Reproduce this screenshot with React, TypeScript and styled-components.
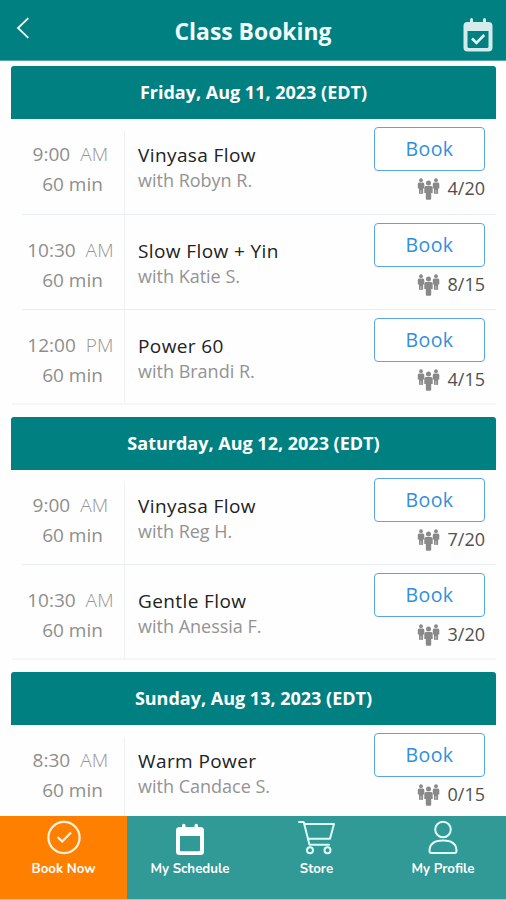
import React from "react";
import styled, { createGlobalStyle } from "styled-components";

const GlobalStyle = createGlobalStyle`
  * { box-sizing: border-box; }
  body { margin: 0; background: #fff; font-family: "Open Sans", "Noto Sans", sans-serif; }
`;

const Screen = styled.div`
  width: 506px;
  height: 900px;
  display: flex;
  flex-direction: column;
  overflow: hidden;
  background: #fefefe;
`;

const TopBar = styled.header`
  flex: 0 0 61px;
  display: grid;
  grid-template-columns: 48px 1fr 48px;
  align-items: start;
  background: #008080;
  border-bottom: 1px solid #5aa9a9;
`;

const IconButton = styled.button<{ $top: number; $left: number }>`
  display: block;
  border: 0;
  background: none;
  padding: ${(p) => p.$top}px 0 0 ${(p) => p.$left}px;
  text-align: left;
  line-height: 0;
`;

const Title = styled.h1`
  margin: 0;
  padding-top: 16px;
  text-align: center;
  font-size: 22.9px;
  line-height: 32px;
  font-weight: 700;
  color: #f4fbfb;
`;

const Schedule = styled.main`
  flex: 1;
  min-height: 0;
  overflow: hidden;
  padding: 5px 10px 0 11px;
`;

const Day = styled.section`
  height: 351px;
  &:nth-child(2) { height: 255px; }
`;

const DayTitle = styled.h2`
  margin: 0;
  height: 53px;
  border-radius: 3px 3px 0 0;
  background: #008080;
  color: #fff;
  text-align: center;
  font-size: 18px;
  line-height: 53px;
  font-weight: 700;
`;

const Row = styled.div<{ $last: boolean }>`
  height: 95px;
  margin-left: ${(p) => (p.$last ? 1 : 11)}px;
  padding-left: ${(p) => (p.$last ? 10 : 0)}px;
  display: grid;
  grid-template-columns: 103px 1fr 122px;
  border-bottom: ${(p) => (p.$last ? "2px solid #f5f6f6" : "1px solid #e6eeef")};

  ${Day}:first-child > ${DayTitle} + & { height: 96px; }
`;

const TimeCell = styled.div<{ $first: boolean }>`
  margin-top: ${(p) => (p.$first ? 12 : 0)}px;
  padding-top: ${(p) => (p.$first ? 8 : 20)}px;
  padding-right: 5px;
  border-right: 1px solid #f0f2f2;
  text-align: center;
  color: #8e8e8e;
  font-size: 19px;
  line-height: 30px;
`;

const Clock = styled.div`
  white-space: nowrap;
`;

const Meridiem = styled.span`
  margin-left: 10px;
  color: #969696;
  font-weight: 300;
  letter-spacing: 0.2px;
`;

const Duration = styled.div`
  padding-left: 4px;
`;

const ClassCell = styled.div`
  padding: 23px 0 0 13px;
  white-space: nowrap;
`;

const ClassName = styled.div`
  color: #222;
  font-size: 19px;
  line-height: 26px;
  letter-spacing: 0.4px;
`;

const Teacher = styled.div`
  color: #939393;
  font-size: 18px;
  line-height: 24px;
`;

const ActionCell = styled.div`
  padding: 8px 11px 0 0;
`;

const BookButton = styled.button`
  display: block;
  width: 111px;
  height: 44px;
  padding: 0;
  border: 1.5px solid #5aa5e6;
  border-radius: 4px;
  background: #fff;
  color: #2f8fdf;
  font: 400 19.5px/42px "Open Sans", "Noto Sans", sans-serif;
  letter-spacing: 0.4px;
`;

const Capacity = styled.div`
  display: flex;
  justify-content: flex-end;
  gap: 8px;
  height: 34px;
  color: #505050;
  font-size: 18px;
  line-height: 34px;
  svg { margin-top: 6px; }
`;

const TabBar = styled.nav`
  flex: 0 0 84px;
  display: grid;
  grid-template-columns: 127px 126px 127px 126px;
  border-bottom: 1px solid #9ccbc9;
  background: #319996;
`;

const Tab = styled.a<{ $active?: boolean }>`
  display: flex;
  flex-direction: column;
  align-items: center;
  padding-top: 2px;
  background: ${(p) => (p.$active ? "#ff8000" : "#319996")};
  color: #fff;
  font: 700 13.3px/18px "Nunito", "Open Sans", sans-serif;
  white-space: nowrap;
  svg { margin-bottom: 5px; }
`;

const BackIcon = () => (
  <svg width="14" height="22" viewBox="0 0 14 22" fill="none" stroke="#f0f8f8" strokeWidth="1.8">
    <path d="M12.3 1.2 2 11l10.3 9.8" />
  </svg>
);

const CalendarCheckIcon = () => (
  <svg width="30" height="34" viewBox="0 0 30 34">
    <path fill="#d3ebeb" fillRule="evenodd" d="M7 4V1.5a1.5 1.5 0 0 1 3 0V4h10V1.5a1.5 1.5 0 0 1 3 0V4h2.5a4 4 0 0 1 4 4v21.500a4 4 0 0 1-4 4h-21a4 4 0 0 1-4-4V8a4 4 0 0 1 4-4zM4.500 13v15.500a1.500 1.500 0 0 0 1.500 1.500h18a1.500 1.500 0 0 0 1.500-1.500V13z" />
    <path d="m9 20.5 4.500 4.500 7.700-8" fill="none" stroke="#e4f3f3" strokeWidth="2.600" />
  </svg>
);

const CalendarIcon = () => (
  <svg width="30" height="37" viewBox="0 0 30 37">
    <path fill="#fff" fillRule="evenodd" d="M7 9V7.500a1.500 1.500 0 0 1 3.500 0V9h9V7.500a1.500 1.500 0 0 1 3.500 0V9h2.500a3.500 3.500 0 0 1 3.500 3.500v21a3.500 3.500 0 0 1-3.500 3.500h-21A3.500 3.500 0 0 1 1 33.500v-21A3.500 3.500 0 0 1 4.500 9zM5 18v14.200a1 1 0 0 0 1 1h18a1 1 0 0 0 1-1V18z" />
  </svg>
);

const CheckCircleIcon = () => (
  <svg width="36" height="37" viewBox="0 0 36 37" fill="none" stroke="#fff4df" strokeWidth="2.200">
    <circle cx="18" cy="19.500" r="15.600" />
    <path d="m11.500 19 4.700 4.500 8.800-9" />
  </svg>
);

const CartIcon = () => (
  <svg width="39" height="37" viewBox="0 0 39 37" fill="none" stroke="#dcfffc" strokeWidth="2" strokeLinejoin="round" strokeLinecap="round">
    <path d="M2 4h4.700L12.500 26.800h19.500M7.500 6H37l-4 14.700H11" />
    <circle cx="13" cy="32.200" r="3" />
    <circle cx="30.500" cy="32.200" r="3" />
  </svg>
);

const ProfileIcon = () => (
  <svg width="30" height="37" viewBox="0 0 30 37" fill="none" stroke="#e2fffd" strokeWidth="2">
    <circle cx="15" cy="11.500" r="7.800" />
    <path d="M1.500 33c0-7 5-10.500 13.500-10.500s13.500 3.500 13.500 10.500q0 2-2 2h-23q-2 0-2-2Z" />
  </svg>
);

const PeopleIcon = () => (
  <svg width="23" height="24" viewBox="0 0 23 24" fill="#898989">
    <circle cx="4" cy="3.200" r="1.900" />
    <path d="M2 5.500h4q1.300.1 1.300 1.500v4.500H6.100V16q0 1-.8 1H4.200v-4h-.5v4H2.800Q2 17 2 16v-4.500H.8V7Q.8 5.600 2 5.500Z" />
    <circle cx="19" cy="3.200" r="1.900" />
    <path d="M17 5.500h4q1.300.1 1.300 1.500v4.500h-1.200V16q0 1-.8 1h-1.100v-4h-.5v4h-.9q-.8 0-.8-1v-4.500h-1.200V7q0-1.400 1.200-1.500Z" />
    <circle cx="11.500" cy="6" r="2.500" />
    <path d="M9 9.100h5q1.700.1 1.700 1.800v5h-1.500v5.600q0 1.200-1 1.200h-3.400q-1 0-1-1.200v-5.600H7.300v-5Q7.300 9.200 9 9.100Z" />
  </svg>
);

const days = [
  {
    date: "Friday, Aug 11, 2023 (EDT)",
    classes: [
      ["9:00", "AM", "Vinyasa Flow", "Robyn R.", "4/20"],
      ["10:30", "AM", "Slow Flow + Yin", "Katie S.", "8/15"],
      ["12:00", "PM", "Power 60", "Brandi R.", "4/15"],
    ],
  },
  {
    date: "Saturday, Aug 12, 2023 (EDT)",
    classes: [
      ["9:00", "AM", "Vinyasa Flow", "Reg H.", "7/20"],
      ["10:30", "AM", "Gentle Flow", "Anessia F.", "3/20"],
    ],
  },
  {
    date: "Sunday, Aug 13, 2023 (EDT)",
    classes: [["8:30", "AM", "Warm Power", "Candace S.", "0/15"]],
  },
];

export default function App() {
  return (
    <Screen>
      <GlobalStyle />
      <TopBar>
        <IconButton $top={17} $left={16} aria-label="Back"><BackIcon /></IconButton>
        <Title>Class Booking</Title>
        <IconButton $top={18} $left={5} aria-label="My bookings"><CalendarCheckIcon /></IconButton>
      </TopBar>
      <Schedule>
        {days.map((day) => (
          <Day key={day.date}>
            <DayTitle>{day.date}</DayTitle>
            {day.classes.map(([time, meridiem, name, teacher, spots], i) => (
              <Row key={time} $last={i === day.classes.length - 1}>
                <TimeCell $first={i === 0}>
                  <Clock>{time}<Meridiem>{meridiem}</Meridiem></Clock>
                  <Duration>60 min</Duration>
                </TimeCell>
                <ClassCell>
                  <ClassName>{name}</ClassName>
                  <Teacher>with {teacher}</Teacher>
                </ClassCell>
                <ActionCell>
                  <BookButton>Book</BookButton>
                  <Capacity><PeopleIcon />{spots}</Capacity>
                </ActionCell>
              </Row>
            ))}
          </Day>
        ))}
      </Schedule>
      <TabBar>
        <Tab $active><CheckCircleIcon />Book Now</Tab>
        <Tab><CalendarIcon />My Schedule</Tab>
        <Tab><CartIcon />Store</Tab>
        <Tab><ProfileIcon />My Profile</Tab>
      </TabBar>
    </Screen>
  );
}
